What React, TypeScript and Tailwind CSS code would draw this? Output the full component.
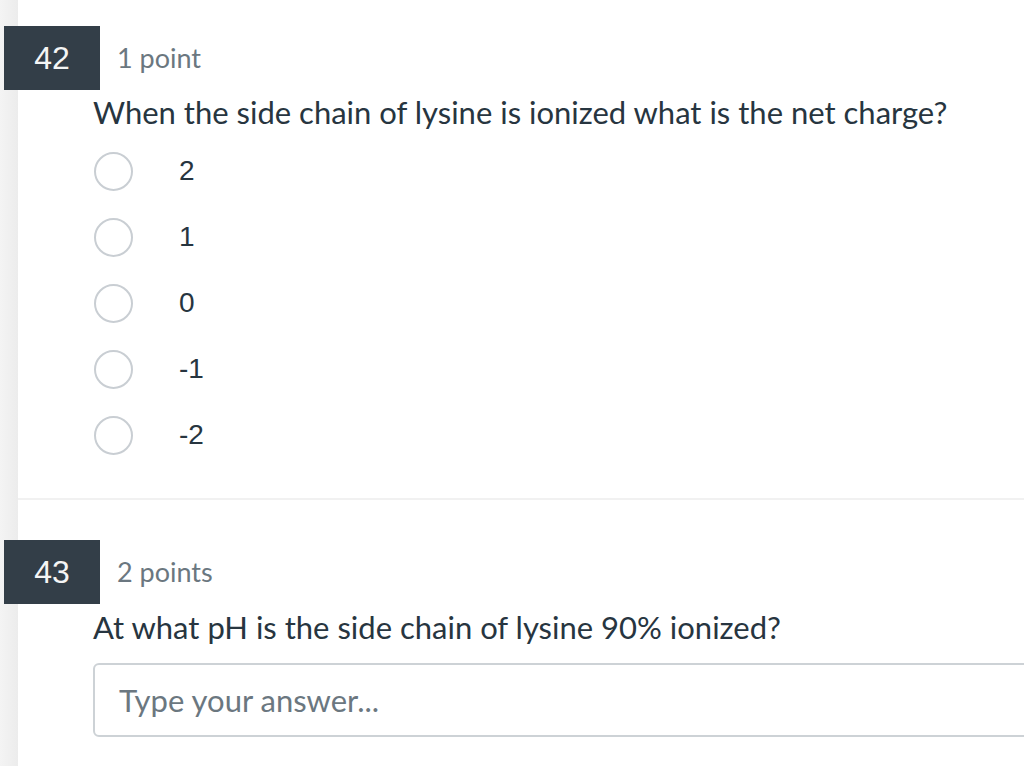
import React from "react";

type Option = { label: string };

const options: Option[] = [
  { label: "2" },
  { label: "1" },
  { label: "0" },
  { label: "-1" },
  { label: "-2" },
];

const lato = "font-['Lato','Liberation_Sans',sans-serif]";
const arial = "font-['Liberation_Sans','Arial',sans-serif]";

const NumberBox = ({ n }: { n: number }) => (
  <div
    className={`ml-[-14px] flex h-[64px] w-[96px] shrink-0 items-center justify-center bg-[#333e48] text-[32px] text-[#f5f5f5] ${arial}`}
  >
    {n}
  </div>
);

const App = () => {
  return (
    <div className="flex h-[766px] w-[1024px] overflow-hidden bg-white">
      <div className="w-[18px] shrink-0 bg-gradient-to-r from-[#f4f4f4] to-[#ececec]" />
      <div className="flex min-w-0 flex-1 flex-col">
        {/* question 42 */}
        <div className="pt-[26px]">
          <div className="flex items-center">
            <NumberBox n={42} />
            <span className={`ml-[17px] text-[27px] text-[#6b7780] ${lato}`}>
              1 point
            </span>
          </div>
          <div
            className={`mt-[4px] pl-[75px] text-[31px] leading-[36px] text-[#273540] ${lato}`}
          >
            When the side chain of lysine is ionized what is the net charge?
          </div>
          <div className="mt-[8px] flex flex-col pl-[76px]">
            {options.map((opt, i) => (
              <label key={i} className="flex h-[66px] items-center">
                <span className="h-[39px] w-[39px] shrink-0 rounded-full border-2 border-[#c9ced3] bg-white" />
                <span
                  className={`ml-[46px] text-[28px] text-[#273540] ${arial}`}
                >
                  {opt.label}
                </span>
              </label>
            ))}
          </div>
        </div>

        <div className="mt-[30px] h-[2px] bg-[#f1f1f1]" />

        {/* question 43 */}
        <div className="mt-[40px]">
          <div className="flex items-center">
            <NumberBox n={43} />
            <span className={`ml-[17px] text-[27px] text-[#6b7780] ${lato}`}>
              2 points
            </span>
          </div>
          <div
            className={`mt-[5px] pl-[75px] text-[31px] leading-[36px] text-[#273540] ${lato}`}
          >
            At what pH is the side chain of lysine 90% ionized?
          </div>
          <div className="mt-[18px] pl-[75px]">
            <div
              className={`flex h-[74px] w-[980px] items-center rounded-[6px] border-2 border-[#cdd2d6] pl-[24px] text-[31px] text-[#6b7780] ${lato}`}
            >
              Type your answer...
            </div>
          </div>
        </div>
      </div>
    </div>
  );
};

export default App;
